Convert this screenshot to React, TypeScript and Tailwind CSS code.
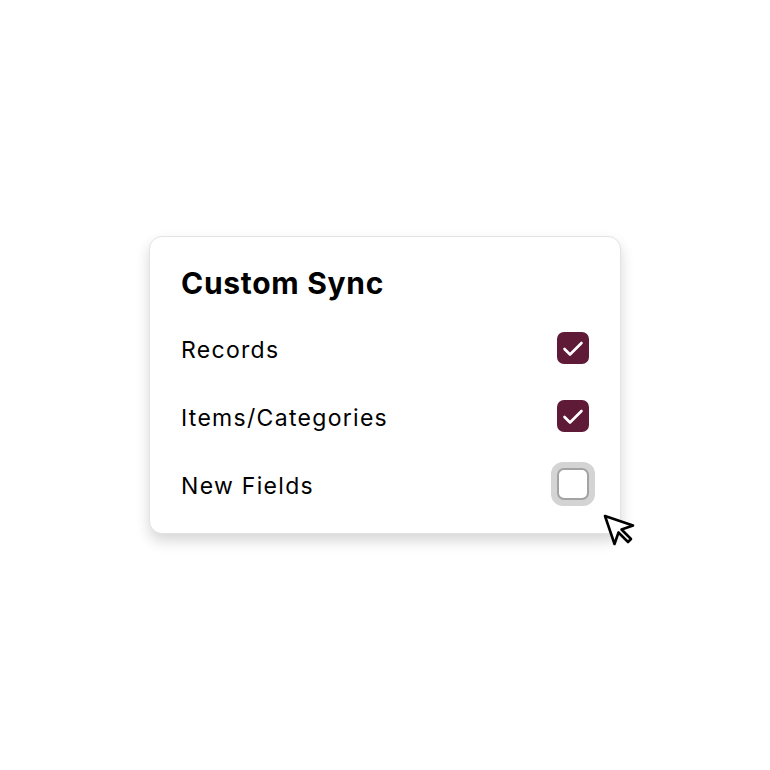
import React from "react";

const rows = [
  { label: "Records", checked: true },
  { label: "Items/Categories", checked: true },
  { label: "New Fields", checked: false },
];

function CheckIcon() {
  return (
    <svg viewBox="0 0 32 32" className="h-8 w-8">
      <path
        d="M7.5 17 L13 22.5 L24.5 11"
        fill="none"
        stroke="white"
        strokeWidth="2.6"
        strokeLinecap="round"
        strokeLinejoin="round"
      />
    </svg>
  );
}

function Cursor() {
  return (
    <svg viewBox="0 0 34 34" className="h-[34px] w-[34px]">
      <path
        d="M3 3 L31 12.5 L19.5 16.5 L29 26 L26 29 L16.5 19.5 L12.5 31 Z"
        fill="white"
        stroke="black"
        strokeWidth="2.6"
        strokeLinejoin="round"
      />
    </svg>
  );
}

export default function App() {
  return (
    <div className="flex min-h-screen items-center justify-center bg-white font-['Inter',sans-serif] text-black">
      <div className="relative w-[472px] rounded-[13px] border border-[#e3e3e3] bg-white px-[31px] pt-[26px] pb-[33px] shadow-[0_7px_14px_rgba(0,0,0,0.16)]">
        <h1 className="text-[30px] font-bold leading-[40px] tracking-[0.7px]">Custom Sync</h1>
        <div className="mt-[29px] flex flex-col gap-[36px]">
          {rows.map((row) => (
            <div key={row.label} className="flex h-8 items-center justify-between">
              <span className="mt-[4px] text-[23px] leading-8 tracking-[1.3px]">{row.label}</span>
              {row.checked ? (
                <span className="flex h-8 w-8 items-center justify-center rounded-[7px] bg-[#5e1a36]">
                  <CheckIcon />
                </span>
              ) : (
                <span className="-mr-[6px] flex h-[44px] w-[44px] items-center justify-center rounded-[12px] bg-[#d4d4d4]">
                  <span className="h-8 w-8 rounded-[7px] border-2 border-[#a3a3a3] bg-white" />
                </span>
              )}
            </div>
          ))}
        </div>
        <div className="absolute left-[452px] top-[276px]">
          <Cursor />
        </div>
      </div>
    </div>
  );
}
